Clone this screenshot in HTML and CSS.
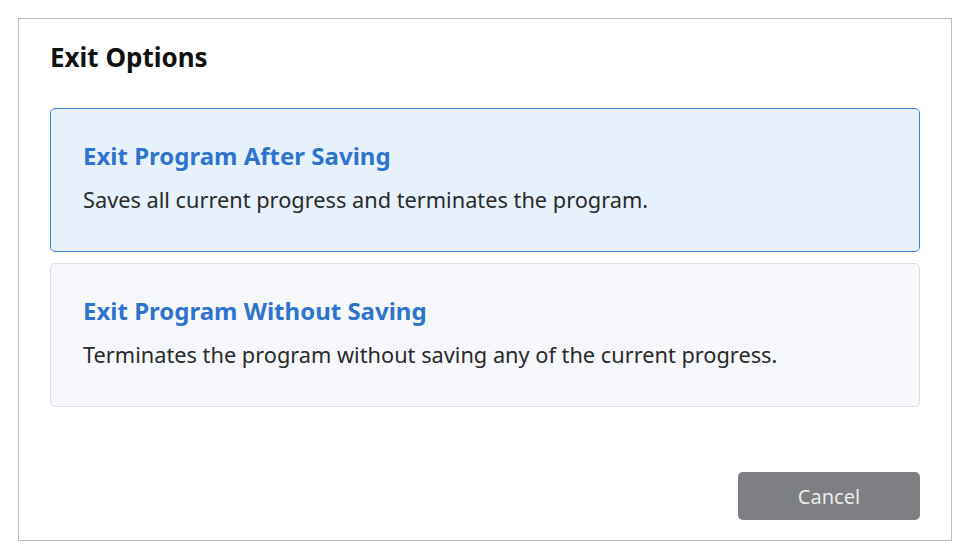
FILE: index.html
```html
<!DOCTYPE html>
<html lang="en">
<head>
<meta charset="utf-8">
<title>Exit Options</title>
<link rel="stylesheet" href="styles.css">
</head>
<body>
<div class="dialog">
  <h1 class="dialog-title">Exit Options</h1>
  <div class="options">
    <div class="option option-active">
      <div class="option-title">Exit Program After Saving</div>
      <div class="option-desc">Saves all current progress and terminates the program.</div>
    </div>
    <div class="option">
      <div class="option-title">Exit Program Without Saving</div>
      <div class="option-desc">Terminates the program without saving any of the current progress.</div>
    </div>
  </div>
  <div class="actions">
    <button class="btn-cancel">Cancel</button>
  </div>
</div>
</body>
</html>
```

FILE: styles.css
```css
* { box-sizing: border-box; }
html, body { margin: 0; padding: 0; background: #ffffff; }
body {
  font-family: "Noto Sans", "Open Sans", sans-serif;
  color: #1f1f1f;
}
.dialog {
  margin: 18px 0 0 18px;
  width: 934px;
  height: 523px;
  border: 1px solid #bdbdbd;
  padding: 0 31px;
  display: flex;
  flex-direction: column;
}
.dialog-title {
  margin: 0;
  padding-top: 21px;
  font-size: 26px;
  font-weight: 700;
  line-height: 34px;
  color: #111;
}
.options {
  margin-top: 34px;
  display: flex;
  flex-direction: column;
  gap: 11px;
}
.option {
  height: 144px;
  border: 1px solid #dcdde0;
  border-radius: 5px;
  background: #f7f8fc;
  padding: 30px 32px 0;
}
.option-active {
  background: #e6f1fb;
  border-color: #3f84d4;
}
.option-title {
  font-size: 24px;
  font-weight: 700;
  line-height: 33px;
  color: #2f74cc;
}
.option-desc {
  margin-top: 12px;
  font-size: 21.75px;
  line-height: 31px;
  color: #2a2a2a;
}
.actions {
  margin-top: auto;
  padding-bottom: 20px;
  display: flex;
  justify-content: flex-end;
}
.btn-cancel {
  width: 182px;
  height: 48px;
  border: none;
  border-radius: 5px;
  background: #7e7f82;
  color: #ececec;
  font-family: "Noto Sans", "Open Sans", sans-serif;
  font-size: 20px;
}
```
